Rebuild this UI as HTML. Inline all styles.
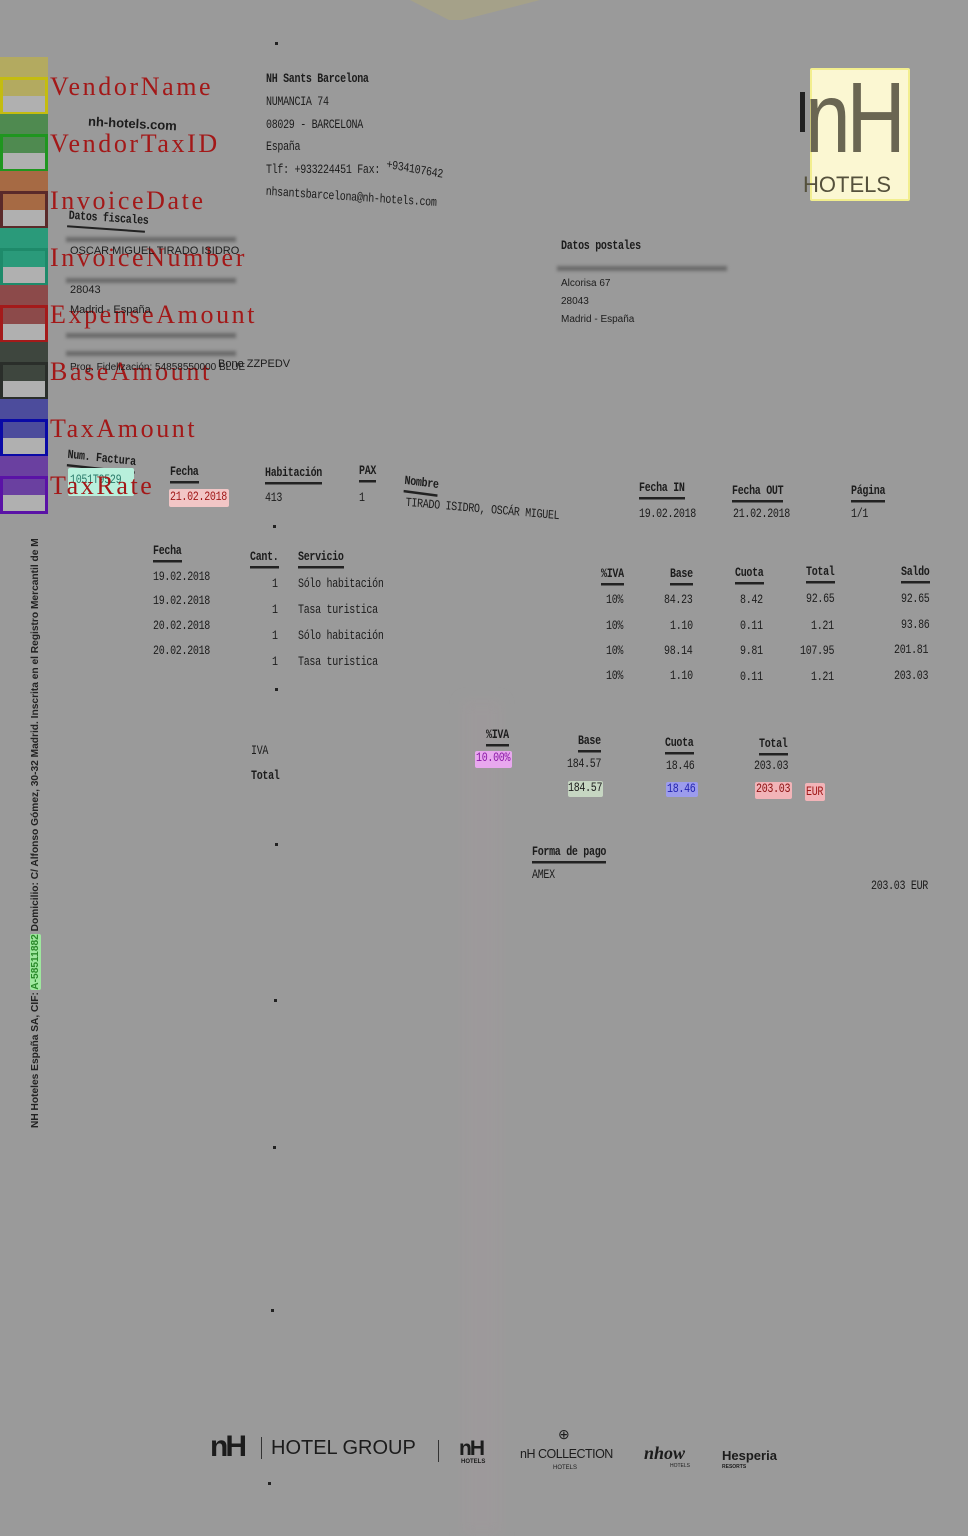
<!DOCTYPE html>
<html><head><meta charset="utf-8"><style>
*{margin:0;padding:0;box-sizing:border-box}
body{width:968px;height:1536px;background:#9a9a9a;position:relative;overflow:hidden;font-family:"Liberation Mono",monospace;color:#1c1c1c}
.t{position:absolute;font-size:10px;white-space:nowrap;transform-origin:0 0;transform:scaleY(1.25);letter-spacing:-0.3px}
.b{font-weight:bold}
.u{border-bottom:2px solid #222;padding-bottom:1px}
.s{position:absolute;font-family:"Liberation Sans",sans-serif;white-space:nowrap;color:#1c1c1c}
.lg{position:absolute;left:50px;font-family:"Liberation Serif",serif;font-size:26px;color:#a31818;white-space:nowrap;letter-spacing:2.6px}
.bx{position:absolute;left:0;width:48px}
.hl{position:absolute;border-radius:2px}
.blur{position:absolute;height:5px;background:#6a6a6a;filter:blur(1.5px)}
</style></head><body>
<div style="position:absolute;left:410px;top:0;width:130px;height:20px;background:#ada77e;clip-path:polygon(0 0,100% 0,40% 100%,30% 100%);opacity:.6"></div>
<div style="position:absolute;left:462px;top:700px;width:40px;height:836px;background:#a0999c;opacity:.5;filter:blur(6px)"></div>

<!-- legend -->
<div class="bx" style="top:57px;height:20px;background:#b3aa60"></div>
<div class="bx" style="top:77px;height:38px;border:3px solid #c4bc10;background:linear-gradient(#b3aa60 50%,#b0b0b0 50%)"></div>
<div class="lg" style="top:72px">VendorName</div>
<div class="bx" style="top:114px;height:20px;background:#4f8a50"></div>
<div class="bx" style="top:134px;height:38px;border:3px solid #1f961f;background:linear-gradient(#4f8a50 50%,#b0b0b0 50%)"></div>
<div class="lg" style="top:129px">VendorTaxID</div>
<div class="bx" style="top:171px;height:20px;background:#a66a44"></div>
<div class="bx" style="top:191px;height:38px;border:3px solid #5a2a2a;background:linear-gradient(#a66a44 50%,#b0b0b0 50%)"></div>
<div class="lg" style="top:186px">InvoiceDate</div>
<div class="bx" style="top:228px;height:20px;background:#2a9a7a"></div>
<div class="bx" style="top:248px;height:38px;border:3px solid #1e8a6a;background:linear-gradient(#2a9a7a 50%,#b0b0b0 50%)"></div>
<div class="lg" style="top:243px">InvoiceNumber</div>
<div class="bx" style="top:285px;height:20px;background:#8c4a4a"></div>
<div class="bx" style="top:305px;height:38px;border:3px solid #a41a1a;background:linear-gradient(#8c4a4a 50%,#b0b0b0 50%)"></div>
<div class="lg" style="top:300px">ExpenseAmount</div>
<div class="bx" style="top:342px;height:20px;background:#3e463e"></div>
<div class="bx" style="top:362px;height:38px;border:3px solid #2a2e2a;background:linear-gradient(#3e463e 50%,#b0b0b0 50%)"></div>
<div class="lg" style="top:357px">BaseAmount</div>
<div class="bx" style="top:399px;height:20px;background:#4c4c9c"></div>
<div class="bx" style="top:419px;height:38px;border:3px solid #0a0aa6;background:linear-gradient(#4c4c9c 50%,#b0b0b0 50%)"></div>
<div class="lg" style="top:414px">TaxAmount</div>
<div class="bx" style="top:456px;height:20px;background:#6a40a0"></div>
<div class="bx" style="top:476px;height:38px;border:3px solid #5a12a6;background:linear-gradient(#6a40a0 50%,#b0b0b0 50%)"></div>

<div class="s" style="left:30px;top:1128px;font-size:10.2px;font-weight:bold;transform:rotate(-90deg);transform-origin:0 0;color:#222">NH Hoteles España SA, CIF: <span style="background:#9ee89e;color:#2a8a2a;border-radius:2px">A-58511882</span> Domicilio: C/ Alfonso Gómez, 30-32 Madrid. Inscrita en el Registro Mercantil de M</div>

<!-- vendor header -->
<div class="t b" style="left:266px;top:73px">NH Sants Barcelona</div>
<div class="t" style="left:266px;top:96px">NUMANCIA 74</div>
<div class="t" style="left:266px;top:119px">08029 - BARCELONA</div>
<div class="t" style="left:266px;top:141px">España</div>
<div class="t" style="left:266px;top:164px">Tlf: +933224451  Fax: <span style="display:inline-block;transform:rotate(8deg)">+934107642</span></div>
<div class="t" style="left:266px;top:186px;transform:scaleY(1.25) rotate(3deg)">nhsantsbarcelona@nh-hotels.com</div>
<div class="s" style="left:88px;top:116px;font-size:13px;transform:rotate(3deg);font-weight:bold">nh-hotels.com</div>

<!-- logo -->
<div class="hl" style="left:810px;top:68px;width:100px;height:133px;background:#fbf7d2;border:2px solid #f2ee8e"></div>
<div class="s" style="left:805px;top:68px;font-size:100px;color:#6a6652;letter-spacing:-5px;line-height:1;transform:scaleX(0.82);transform-origin:0 0">nH</div>
<div style="position:absolute;left:800px;top:92px;width:5px;height:40px;background:#222"></div>
<div class="s" style="left:803px;top:172px;font-size:22px;color:#55513c;letter-spacing:0">HOTELS</div>

<!-- datos fiscales -->
<div class="t b" style="left:69px;top:210px;transform:scaleY(1.25) rotate(3deg)">Datos fiscales</div>
<div style="position:absolute;left:67px;top:228px;width:78px;height:2px;background:#222;transform:rotate(4deg)"></div>
<div class="blur" style="left:66px;top:237px;width:170px"></div>
<div class="s" style="left:70px;top:245px;font-size:11px">OSCAR MIGUEL TIRADO ISIDRO</div>
<div class="blur" style="left:66px;top:278px;width:170px"></div>
<div class="s" style="left:70px;top:284px;font-size:11px">28043</div>
<div class="s" style="left:70px;top:304px;font-size:11px">Madrid - España</div>
<div class="blur" style="left:66px;top:333px;width:170px"></div>
<div class="blur" style="left:66px;top:351px;width:170px"></div>
<div class="s" style="left:70px;top:362px;font-size:10px">Prog. Fidelización: 54858550000 BLUE</div>
<div class="s" style="left:218px;top:358px;font-size:11px">Bono ZZPEDV</div>

<!-- datos postales -->
<div class="t b" style="left:561px;top:240px">Datos postales</div>
<div class="blur" style="left:557px;top:266px;width:170px"></div>
<div class="s" style="left:561px;top:278px;font-size:10px">Alcorisa 67</div>
<div class="s" style="left:561px;top:296px;font-size:10px">28043</div>
<div class="s" style="left:561px;top:314px;font-size:10px">Madrid - España</div>

<!-- header row -->
<div class="t b" style="left:68px;top:449px;transform:scaleY(1.25) rotate(5deg)"><span class="u">Num. Factura</span></div>
<div class="hl" style="left:68px;top:468px;width:66px;height:28px;background:#b8f0dc"></div>
<div class="t" style="left:70px;top:474px;color:#2a7a6a">1051T9529</div>
<div class="lg" style="top:471px">TaxRate</div>
<div class="t b" style="left:170px;top:466px"><span class="u">Fecha</span></div>
<div class="hl" style="left:169px;top:489px;width:60px;height:18px;background:#f2c6c6"></div>
<div class="t" style="left:170px;top:491px;color:#a01818">21.02.2018</div>
<div class="t b" style="left:265px;top:467px"><span class="u">Habitación</span></div>
<div class="t" style="left:265px;top:492px">413</div>
<div class="t b" style="left:359px;top:465px"><span class="u">PAX</span></div>
<div class="t" style="left:359px;top:492px">1</div>
<div class="t b" style="left:405px;top:475px;transform:scaleY(1.25) rotate(6deg)"><span class="u">Nombre</span></div>
<div class="t" style="left:406px;top:497px;transform:scaleY(1.25) rotate(4deg)">TIRADO ISIDRO, OSCÁR MIGUEL</div>
<div class="t b" style="left:639px;top:482px"><span class="u">Fecha IN</span></div>
<div class="t" style="left:639px;top:508px">19.02.2018</div>
<div class="t b" style="left:732px;top:485px"><span class="u">Fecha OUT</span></div>
<div class="t" style="left:733px;top:508px">21.02.2018</div>
<div class="t b" style="left:851px;top:485px"><span class="u">Página</span></div>
<div class="t" style="left:851px;top:508px">1/1</div>

<!-- detail table -->
<div class="t b" style="left:153px;top:545px"><span class="u">Fecha</span></div>
<div class="t" style="left:153px;top:571px">19.02.2018</div>
<div class="t" style="left:153px;top:595px">19.02.2018</div>
<div class="t" style="left:153px;top:620px">20.02.2018</div>
<div class="t" style="left:153px;top:645px">20.02.2018</div>
<div class="t b" style="left:250px;top:551px"><span class="u">Cant.</span></div>
<div class="t b" style="left:298px;top:551px"><span class="u">Servicio</span></div>
<div class="t" style="left:272px;top:578px">1</div><div class="t" style="left:298px;top:578px">Sólo habitación</div>
<div class="t" style="left:272px;top:604px">1</div><div class="t" style="left:298px;top:604px">Tasa turistica</div>
<div class="t" style="left:272px;top:630px">1</div><div class="t" style="left:298px;top:630px">Sólo habitación</div>
<div class="t" style="left:272px;top:656px">1</div><div class="t" style="left:298px;top:656px">Tasa turistica</div>

<div class="t b" style="left:601px;top:568px"><span class="u">%IVA</span></div>
<div class="t b" style="left:670px;top:568px"><span class="u">Base</span></div>
<div class="t b" style="left:735px;top:567px"><span class="u">Cuota</span></div>
<div class="t b" style="left:806px;top:566px"><span class="u">Total</span></div>
<div class="t b" style="left:901px;top:566px"><span class="u">Saldo</span></div>
<div class="t" style="left:606px;top:594px">10%</div><div class="t" style="left:664px;top:594px">84.23</div><div class="t" style="left:740px;top:594px">8.42</div><div class="t" style="left:806px;top:593px">92.65</div><div class="t" style="left:901px;top:593px">92.65</div>
<div class="t" style="left:606px;top:620px">10%</div><div class="t" style="left:670px;top:620px">1.10</div><div class="t" style="left:740px;top:620px">0.11</div><div class="t" style="left:811px;top:620px">1.21</div><div class="t" style="left:901px;top:619px">93.86</div>
<div class="t" style="left:606px;top:645px">10%</div><div class="t" style="left:664px;top:645px">98.14</div><div class="t" style="left:740px;top:645px">9.81</div><div class="t" style="left:800px;top:645px">107.95</div><div class="t" style="left:894px;top:644px">201.81</div>
<div class="t" style="left:606px;top:670px">10%</div><div class="t" style="left:670px;top:670px">1.10</div><div class="t" style="left:740px;top:671px">0.11</div><div class="t" style="left:811px;top:671px">1.21</div><div class="t" style="left:894px;top:670px">203.03</div>

<!-- totals -->
<div class="t" style="left:251px;top:745px">IVA</div>
<div class="t b" style="left:251px;top:770px">Total</div>
<div class="t b" style="left:486px;top:729px"><span class="u">%IVA</span></div>
<div class="hl" style="left:475px;top:751px;width:37px;height:17px;background:#e8a8ee"></div>
<div class="t" style="left:476px;top:752px;color:#8a18a6">10.00%</div>
<div class="t b" style="left:578px;top:735px"><span class="u">Base</span></div>
<div class="t" style="left:567px;top:758px">184.57</div>
<div class="hl" style="left:568px;top:781px;width:35px;height:16px;background:#c6d6c2"></div>
<div class="t" style="left:568px;top:782px">184.57</div>
<div class="t b" style="left:665px;top:737px"><span class="u">Cuota</span></div>
<div class="t" style="left:666px;top:760px">18.46</div>
<div class="hl" style="left:666px;top:782px;width:32px;height:15px;background:#9c9cec"></div>
<div class="t" style="left:667px;top:783px;color:#2222b0">18.46</div>
<div class="t b" style="left:759px;top:738px"><span class="u">Total</span></div>
<div class="t" style="left:754px;top:760px">203.03</div>
<div class="hl" style="left:755px;top:782px;width:37px;height:17px;background:#f2b4b8"></div>
<div class="t" style="left:756px;top:783px;color:#8a1010">203.03</div>
<div class="hl" style="left:805px;top:783px;width:20px;height:18px;background:#f2b4b8"></div>
<div class="t" style="left:806px;top:786px;color:#a01818">EUR</div>

<div class="t b" style="left:532px;top:846px"><span class="u">Forma de pago</span></div>
<div class="t" style="left:532px;top:869px">AMEX</div>
<div class="t" style="left:871px;top:880px">203.03  EUR</div>

<!-- dots -->
<div style="position:absolute;left:275px;top:42px;width:3px;height:3px;background:#222"></div>
<div style="position:absolute;left:273px;top:525px;width:3px;height:3px;background:#222"></div>
<div style="position:absolute;left:275px;top:688px;width:3px;height:3px;background:#222"></div>
<div style="position:absolute;left:275px;top:843px;width:3px;height:3px;background:#222"></div>
<div style="position:absolute;left:274px;top:999px;width:3px;height:3px;background:#222"></div>
<div style="position:absolute;left:273px;top:1146px;width:3px;height:3px;background:#222"></div>
<div style="position:absolute;left:271px;top:1309px;width:3px;height:3px;background:#222"></div>
<div style="position:absolute;left:268px;top:1482px;width:3px;height:3px;background:#222"></div>

<!-- footer brands -->
<div class="s" style="left:210px;top:1432px;font-size:30px;font-weight:bold;letter-spacing:-3px;line-height:1">nH</div>
<div style="position:absolute;left:261px;top:1437px;width:1px;height:22px;background:#333"></div>
<div class="s" style="left:271px;top:1438px;font-size:20px;line-height:1">HOTEL GROUP</div>
<div style="position:absolute;left:438px;top:1440px;width:1px;height:22px;background:#333"></div>
<div class="s" style="left:459px;top:1438px;font-size:21px;font-weight:bold;letter-spacing:-2px;line-height:1">nH</div>
<div class="s" style="left:461px;top:1459px;font-size:6px;font-weight:bold">HOTELS</div>
<div class="s" style="left:558px;top:1427px;font-size:14px;line-height:1">⊕</div>
<div class="s" style="left:520px;top:1448px;font-size:12.5px;line-height:1;letter-spacing:-0.5px">nH COLLECTION</div>
<div class="s" style="left:553px;top:1465px;font-size:6px">HOTELS</div>
<div class="s" style="left:644px;top:1444px;font-size:18px;font-weight:bold;font-style:italic;font-family:'Liberation Serif',serif;line-height:1">nhow</div>
<div class="s" style="left:670px;top:1463px;font-size:5px">HOTELS</div>
<div class="s" style="left:722px;top:1449px;font-size:13px;font-weight:bold;line-height:1">Hesperia</div>
<div class="s" style="left:722px;top:1464px;font-size:5px;font-weight:bold">RESORTS</div>
</body></html>
